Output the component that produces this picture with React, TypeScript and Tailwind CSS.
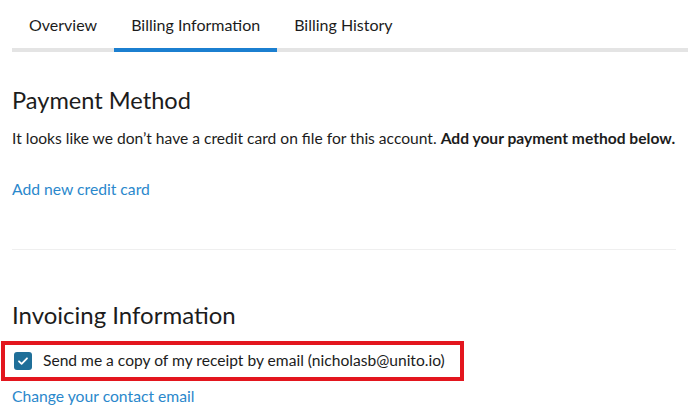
import { useState } from "react";

const tabs = ["Overview", "Billing Information", "Billing History"];

export default function App() {
  const [active, setActive] = useState(1);
  const [sendCopy, setSendCopy] = useState(true);

  return (
    <div className="min-h-[418px] w-[688px] bg-white text-[#1c1c1c]" style={{ fontFamily: "Lato, 'Open Sans', sans-serif" }}>
      {/* tabs */}
      <div className="ml-3 flex border-b-4 border-[#e4e4e4]">
        {tabs.map((t, i) => (
          <button
            key={t}
            onClick={() => setActive(i)}
            className={`-mb-1 flex h-[52px] items-center border-b-4 px-[17px] pt-[2px] text-[16px] ${
              active === i ? "border-[#1b7fd0]" : "border-transparent"
            }`}
          >
            {t}
          </button>
        ))}
      </div>

      <div className="px-3">
        <h2 className="mt-8 text-[23.6px] leading-8">Payment Method</h2>
        <p className="mt-[11px] text-[15.6px] leading-[22px]">
          It looks like we don’t have a credit card on file for this account.{" "}
          <span className="font-bold">Add your payment method below.</span>
        </p>
        <a href="#" className="mt-[29px] block text-[15.7px] leading-[22px] text-[#2a88cc]">
          Add new credit card
        </a>

        <div className="mt-[49px] h-px bg-[#efefef]" />

        <h2 className="mt-[49px] text-[24px] leading-8">Invoicing Information</h2>

        <label className="-ml-[11px] mt-[10px] flex h-[40px] w-[463px] cursor-pointer items-center border-4 border-[#e3161e] pl-[9px]">
          <span
            onClick={() => setSendCopy(!sendCopy)}
            className={`flex h-[18px] w-[18px] items-center justify-center rounded-[3px] ${
              sendCopy ? "bg-[#1f6f99]" : "border border-gray-400 bg-white"
            }`}
          >
            {sendCopy && (
              <svg width="12" height="12" viewBox="0 0 12 12" fill="none">
                <path d="M2 6.3l2.6 2.5L10 3.3" stroke="white" strokeWidth="1.8" strokeLinecap="round" strokeLinejoin="round" />
              </svg>
            )}
          </span>
          <span className="ml-[11px] text-[15.6px]">Send me a copy of my receipt by email (nicholasb@unito.io)</span>
        </label>

        <a href="#" className="mt-1 block text-[15.7px] leading-[22px] text-[#2a88cc]">
          Change your contact email
        </a>
      </div>
    </div>
  );
}
